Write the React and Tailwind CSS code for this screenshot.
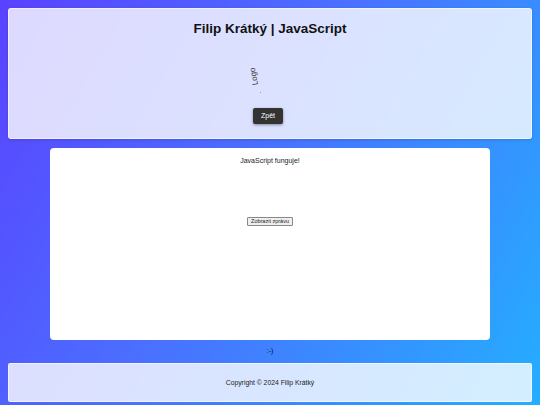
import React from "react";

export default function App() {
  return (
    <div
      className="w-[540px] h-[405px] overflow-hidden bg-[linear-gradient(120deg,#5a42ff_0%,#4a70ff_45%,#24aeff_100%)] px-[8px] pt-[8px] flex flex-col items-stretch"
      style={{ fontFamily: '"Liberation Sans", Arial, sans-serif' }}
    >
      <header className="h-[131px] shrink-0 rounded-[3px] border border-white/60 bg-white/80 shadow-[0_1px_3px_rgba(0,0,0,0.15)] flex flex-col items-center">
        <h1 className="mt-[12px] text-[13.5px] leading-[16px] font-bold text-[#111]">
          Filip Krátký | JavaScript
        </h1>
        <div className="relative h-[70px] w-[40px] mr-[30px]">
          <span className="absolute left-[10px] top-[35px] text-[8px] leading-[9px] text-[#333] rotate-[-100deg] origin-center">
            Logo
          </span>
          <span className="absolute left-[25px] top-[55px] w-[1px] h-[1px] bg-[#999]"></span>
        </div>
        <button className="mt-[1px] mr-[4px] h-[16px] w-[30px] rounded-[2px] bg-[#333] text-white text-[7px] leading-[16px] shadow-[0_1px_3px_rgba(0,0,0,0.4)]">
          Zpět
        </button>
      </header>

      <main className="mt-[9px] mx-[42px] h-[192px] shrink-0 rounded-[4px] bg-white flex flex-col items-center">
        <p className="mt-[8px] text-[7px] leading-[9px] text-[#222]">JavaScript funguje!</p>
        <button className="mt-[52px] h-[9px] px-[3px] border border-[#888] bg-[#efefef] rounded-[1px] text-[5.5px] leading-[7px] text-[#222]">
          Zobrazit zprávu
        </button>
      </main>

      <div className="h-[23px] shrink-0 flex items-center justify-center text-[7px] text-[#111]">:-)</div>

      <footer className="h-[39px] shrink-0 rounded-[2px] border border-white/60 bg-white/80 flex items-center justify-center">
        <p className="text-[6.8px] leading-[9px] text-[#222]">Copyright © 2024 Filip Krátký</p>
      </footer>
    </div>
  );
}
